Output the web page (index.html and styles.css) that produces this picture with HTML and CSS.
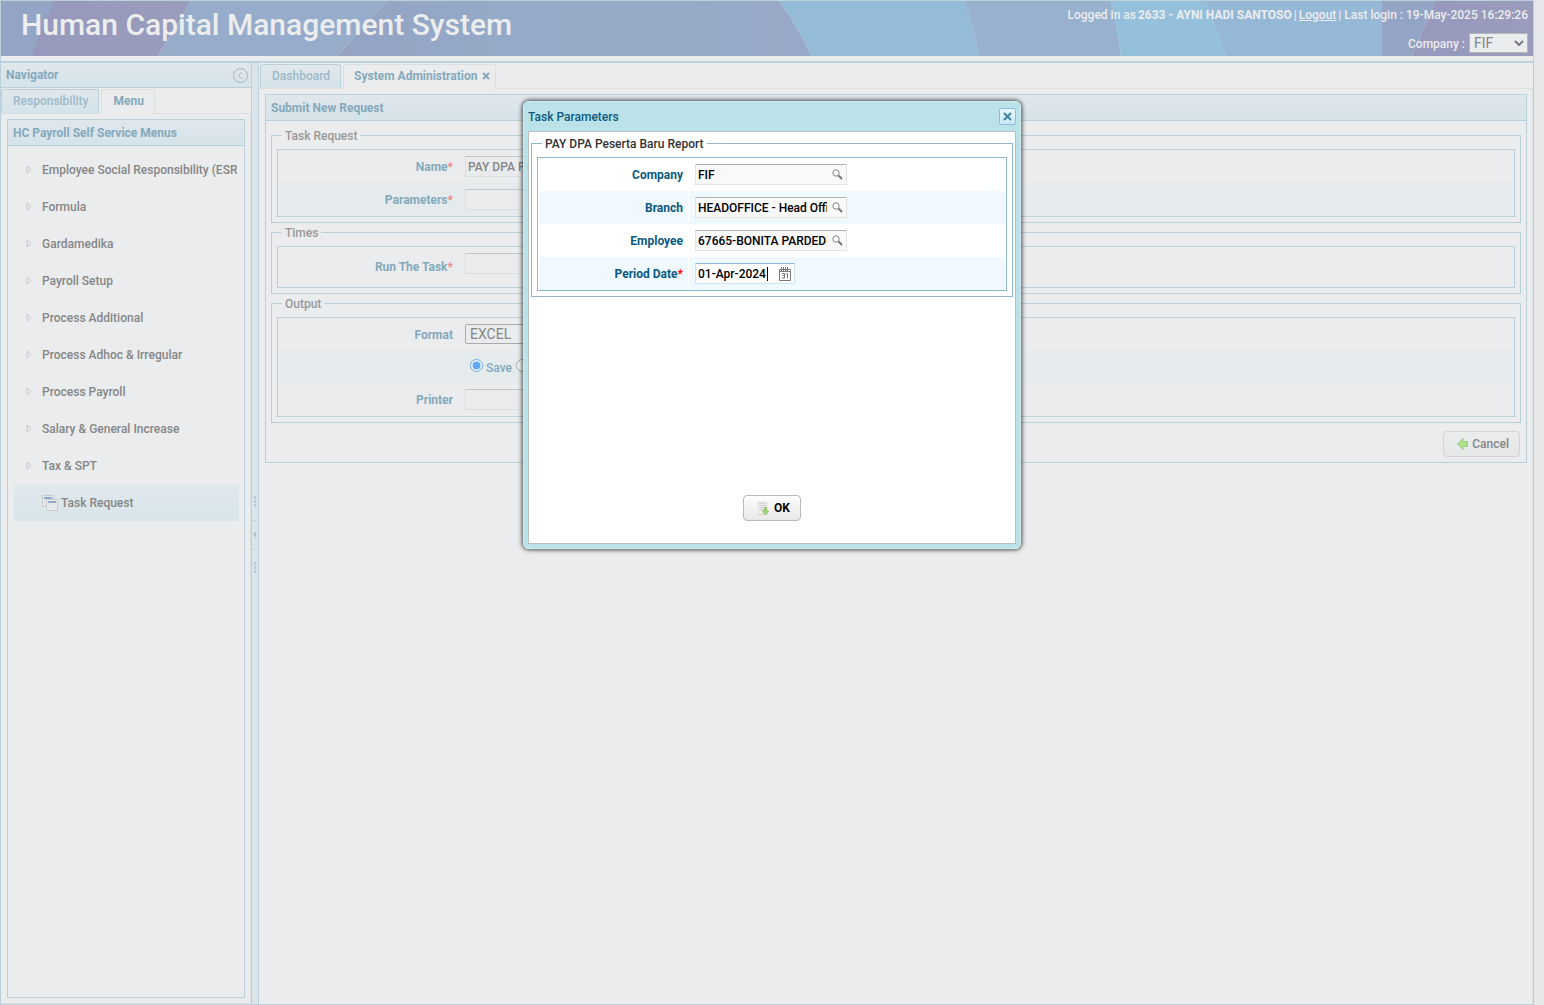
FILE: index.html
```html
<!DOCTYPE html>
<html lang="en">
<head>
<meta charset="utf-8">
<meta name="viewport" content="width=device-width, initial-scale=1">
<title>Human Capital Management System</title>
<link rel="stylesheet" href="styles.css">
</head>
<body>
<div class="app">
  <header class="banner">
    <svg class="banner-art" viewBox="0 0 1534 55" preserveAspectRatio="xMinYMin slice" aria-hidden="true">
      <defs>
        <linearGradient id="dusk"><stop offset="0" stop-color="#94a2c3"/><stop offset=".35" stop-color="#95aac8"/><stop offset=".7" stop-color="#96aac8"/><stop offset="1" stop-color="#98a8c8"/></linearGradient>
        <linearGradient id="lilac"><stop offset="0" stop-color="#9699bd"/><stop offset="1" stop-color="#9a9cbc"/></linearGradient>
      </defs>
      <path fill="#94a4c4" d="M0 0H60V55H0z"/>
      <path fill="url(#lilac)" d="M53 0H190L157 55H30z"/>
      <path fill="#96acca" d="M190 0H386L336 55H157z"/>
      <path fill="url(#dusk)" d="M386 0H778Q797 25 810 55H336z"/>
      <path fill="#94bbd7" d="M778 0H963Q973 27 978 55H810Q797 25 778 0z"/>
      <path fill="#97b1cf" d="M963 0H1110Q1117 27 1120 55H978Q973 27 963 0z"/>
      <path fill="#94c0db" d="M1110 0H1204L1225 55H1120Q1117 27 1110 0z"/>
      <path fill="#95b8d6" d="M1204 0H1381V55H1225z"/>
      <path fill="#94a4c4" d="M1381 0H1434L1411 55H1381z"/>
      <path fill="url(#lilac)" d="M1434 0H1534V55H1411z"/>
    </svg>
    <h1 class="banner-title">Human Capital Management System</h1>
    <div class="session">
      <p class="session-line">Logged in as <strong>2633 - AYNI HADI SANTOSO</strong> | <a href="#logout">Logout</a> | Last login : 19-May-2025 16:29:26</p>
      <p class="session-line"><label for="company-switch">Company :</label>
        <span class="select company-select"><select id="company-switch"><option>FIF</option></select><svg viewBox="0 0 10 6" aria-hidden="true"><path d="M1 1l4 4 4-4"/></svg></span></p>
    </div>
  </header>

  <div class="workspace">
    <aside class="navigator">
      <div class="nav-head"><h2>Navigator</h2>
        <button class="collapse" type="button" aria-label="Collapse navigator"><svg viewBox="0 0 15 15"><circle cx="7.500" cy="7.500" r="7"/><path d="M9 4L5.500 7.500 9 11"/></svg></button></div>
      <div class="tabs nav-tabs">
        <button class="tab" type="button">Responsibility</button>
        <button class="tab active" type="button">Menu</button>
      </div>
      <div class="nav-body">
        <nav class="menu-panel">
          <h2 class="panel-title">HC Payroll Self Service Menus</h2>
          <ul class="tree">
            <li><a href="#esr"><svg class="twist" viewBox="0 0 6 9"><path d="M1 1v7l4-3.500z"/></svg>Employee Social Responsibility (ESR)</a></li>
            <li><a href="#formula"><svg class="twist" viewBox="0 0 6 9"><path d="M1 1v7l4-3.500z"/></svg>Formula</a></li>
            <li><a href="#gardamedika"><svg class="twist" viewBox="0 0 6 9"><path d="M1 1v7l4-3.500z"/></svg>Gardamedika</a></li>
            <li><a href="#setup"><svg class="twist" viewBox="0 0 6 9"><path d="M1 1v7l4-3.500z"/></svg>Payroll Setup</a></li>
            <li><a href="#additional"><svg class="twist" viewBox="0 0 6 9"><path d="M1 1v7l4-3.500z"/></svg>Process Additional</a></li>
            <li><a href="#adhoc"><svg class="twist" viewBox="0 0 6 9"><path d="M1 1v7l4-3.500z"/></svg>Process Adhoc &amp; Irregular</a></li>
            <li><a href="#payroll"><svg class="twist" viewBox="0 0 6 9"><path d="M1 1v7l4-3.500z"/></svg>Process Payroll</a></li>
            <li><a href="#salary"><svg class="twist" viewBox="0 0 6 9"><path d="M1 1v7l4-3.500z"/></svg>Salary &amp; General Increase</a></li>
            <li><a href="#tax"><svg class="twist" viewBox="0 0 6 9"><path d="M1 1v7l4-3.500z"/></svg>Tax &amp; SPT</a></li>
            <li><a class="leaf" href="#task"><svg class="windows" viewBox="0 0 16 16"><path class="pane" d="M.5.500h11v11H.5z"/><path class="bar" d="M2 2h8v2H2z"/><path class="pane" d="M4.500 4.500h11v11h-11z"/><path class="bar" d="M6 6h8v2H6z"/></svg>Task Request</a></li>
          </ul>
        </nav>
      </div>
    </aside>

    <div class="splitter">
      <svg viewBox="0 0 6 80" aria-hidden="true"><path class="dots" d="M3 2v12M3 68v12"/><path class="rule" d="M0 26.500h6M0 55.500h6"/><path class="arrow" d="M4 37.500v6L1 40.500z"/></svg>
    </div>

    <main class="content">
      <div class="tabs content-tabs">
        <button class="tab" type="button">Dashboard</button>
        <button class="tab active" type="button">System Administration<svg class="tab-x" viewBox="0 0 8 8" aria-hidden="true"><path d="M1 1l6 6M7 1L1 7"/></svg></button>
      </div>
      <div class="content-body">
        <form class="request">
          <h2 class="panel-title">Submit New Request</h2>
          <div class="request-body">
            <fieldset>
              <legend>Task Request</legend>
              <div class="grid">
                <div class="row"><label for="name">Name<em>*</em></label><div class="cell"><input class="text wide" id="name" type="text" value="PAY DPA Peserta Baru Report"></div></div>
                <div class="row alt"><label for="params">Parameters<em>*</em></label><div class="cell"><input class="text wide" id="params" type="text"></div></div>
              </div>
            </fieldset>
            <fieldset>
              <legend>Times</legend>
              <div class="grid">
                <div class="row tall"><label for="run">Run The Task<em>*</em></label><div class="cell"><input class="text wide" id="run" type="text"></div></div>
              </div>
            </fieldset>
            <fieldset>
              <legend>Output</legend>
              <div class="grid">
                <div class="row"><label for="format">Format</label><div class="cell"><span class="select format-select"><select id="format"><option>EXCEL</option></select></span></div></div>
                <div class="row alt choice"><span class="spacer"></span><div class="cell radios"><label><input type="radio" name="dest" checked>Save</label><label><input type="radio" name="dest" aria-label="Print"></label></div></div>
                <div class="row"><label for="printer">Printer</label><div class="cell"><input class="text wide" id="printer" type="text"></div></div>
              </div>
            </fieldset>
            <div class="actions">
              <button class="btn" type="button"><svg class="btn-arrow" viewBox="0 0 11 12" aria-hidden="true"><path d="M.5 6L6 .5v3h4.500v5H6v3z"/></svg>Cancel</button>
            </div>
          </div>
        </form>
      </div>
    </main>
  </div>
</div>

<dialog open class="modal" aria-labelledby="modal-title">
  <div class="modal-head"><h2 id="modal-title">Task Parameters</h2>
    <button class="close" type="button" aria-label="Close"><svg viewBox="0 0 9 9"><path d="M1 1l7 7M8 1L1 8"/></svg></button></div>
  <form class="modal-body">
    <fieldset>
      <legend>PAY DPA Peserta Baru Report</legend>
      <div class="grid">
        <div class="row"><label for="p-company">Company</label><div class="cell"><span class="text combo"><input id="p-company" type="text" value="FIF"><svg class="lens" viewBox="0 0 11 11"><circle cx="4" cy="4" r="3.200"/><path class="handle" d="M6.500 6.500L10 10"/></svg></span></div></div>
        <div class="row alt"><label for="p-branch">Branch</label><div class="cell"><span class="text combo"><input id="p-branch" type="text" value="HEADOFFICE - Head Office"><svg class="lens" viewBox="0 0 11 11"><circle cx="4" cy="4" r="3.200"/><path class="handle" d="M6.500 6.500L10 10"/></svg></span></div></div>
        <div class="row"><label for="p-employee">Employee</label><div class="cell"><span class="text combo"><input id="p-employee" type="text" value="67665-BONITA PARDEDE"><svg class="lens" viewBox="0 0 11 11"><circle cx="4" cy="4" r="3.200"/><path class="handle" d="M6.500 6.500L10 10"/></svg></span></div></div>
        <div class="row alt"><label for="p-date">Period Date<em>*</em></label><div class="cell"><span class="text combo date"><input id="p-date" type="text" value="01-Apr-2024"><i class="caret"></i><svg class="calendar" viewBox="0 0 12 14"><path d="M.5 2.500h11v11H.5zM1 4.500h10"/><path d="M2.500 0v4M4.500 0v4M6.500 0v4M8.500 0v4"/><path d="M3 6.500h2.500v4.500H3M3.500 8.500h2M7 7l1.500-.5v5"/></svg></span></div></div>
      </div>
    </fieldset>
    <button class="btn ok" type="button"><svg class="page-icon" viewBox="0 0 14 15" aria-hidden="true"><path fill="#ececec" d="M1 0h11v14H1z"/><path stroke="#cfd3d3" d="M3 2.500h7M3 4.500h7M3 6.500h7M3 8.500h5M2 13.500h9"/><path fill="#a9d580" stroke="#93c26c" d="M8.500 6.500h2v3.500h2l-3 4-3-4h2z"/></svg>OK</button>
  </form>
</dialog>
</body>
</html>
```
FILE: styles.css
```css
:root {
  --page: #ebeced;
  --line: #bad0db;
  --soft: #dcdfe1;
  --head: linear-gradient(#e1e8eb, #dae4eb 55%, #d4e4ea);
  --blue: #84a9bb;
  --ink: #858687;
}
* { box-sizing: border-box; }
body {
  margin: 0;
  padding-right: 10px;
  background: #e5e7e9;
  color: var(--ink);
  font: 500 12px/18px Roboto, "Liberation Sans", sans-serif;
}
h1, h2, p, ul { margin: 0; padding: 0; font: inherit; }
button, input, select { font: inherit; color: inherit; }
button { cursor: pointer; }
em { color: #ee8585; font-style: normal; }
svg { display: block; flex: none; fill: none; }

.app {
  display: flex;
  flex-direction: column;
  min-height: 100vh;
  background: var(--page);
  border: 1px solid var(--line);
}

/* Banner */
.banner {
  position: relative;
  display: flex;
  justify-content: space-between;
  height: 55px;
  padding: 0 5px 0 20px;
  color: #eceded;
  overflow: hidden;
}
.banner-art { position: absolute; inset: 0; width: 100%; height: 100%; }
.banner-title { position: relative; font-size: 30px; font-weight: 500; line-height: 48px; }
.session { position: relative; padding-top: 5px; }
.session-line {
  display: flex;
  justify-content: flex-end;
  gap: 2px;
  height: 27px;
  white-space: nowrap;
}
.session-line strong { font-weight: 700; }
.session-line a { color: inherit; }
.session-line label { padding-right: 2px; line-height: 22px; }
.select { position: relative; display: inline-block; color: var(--ink); }
.select select {
  appearance: none;
  width: 100%;
  height: 20px;
  padding: 0 4px;
  background: var(--page);
  border: 1px solid #b5b6b7;
  border-radius: 0;
  font-size: 14px;
  font-weight: 400;
  line-height: 18px;
}
.select svg { position: absolute; right: 4px; top: 7px; width: 10px; height: 6px; stroke: #77797a; stroke-width: 2; }
.company-select { width: 59px; }
.format-select { width: 100px; }
.format-select select { border-color: #a9aaab; border-radius: 2px; }

/* Workspace */
.workspace {
  flex: 1;
  display: flex;
  margin-top: 5px;
  border-top: 2px solid var(--line);
}
.navigator {
  display: flex;
  flex-direction: column;
  flex: 0 0 251px;
  min-width: 0;
  border-right: 1px solid var(--line);
}
.nav-head {
  display: flex;
  justify-content: space-between;
  align-items: center;
  height: 25px;
  padding: 0 3px 0 5px;
  background: var(--head);
  border-bottom: 1px solid var(--line);
  color: var(--blue);
  font-weight: 700;
}
.collapse { padding: 0; border: 0; background: none; }
.collapse svg { width: 15px; height: 15px; stroke: #a9b3b8; }
.tabs { display: flex; align-items: flex-end; gap: 2px; height: 26px; border-bottom: 1px solid var(--soft); }
.tab {
  display: flex;
  align-items: center;
  height: 24px;
  padding: 0 10px 2px 11px;
  border: 1px solid var(--line);
  border-bottom: 0;
  border-radius: 3px 3px 0 0;
  background: var(--head);
  color: #9bb9c7;
  white-space: nowrap;
}
.tab.active {
  height: 25px;
  margin-bottom: -1px;
  background: var(--page);
  border-color: var(--soft);
  color: var(--blue);
  font-weight: 700;
}
.tab-x { width: 8px; height: 8px; margin-left: 5px; stroke: var(--blue); stroke-width: 2; }
.content-tabs .tab.active { padding-right: 5px; padding-left: 10px; }
.nav-body {
  flex: 1;
  display: flex;
  padding: 5px 5px 5px 6px;
  border-right: 1px solid var(--soft);
  border-bottom: 1px solid var(--soft);
}
.menu-panel { flex: 1; min-width: 0; border: 1px solid var(--line); }
.panel-title {
  height: 26px;
  padding: 0 5px;
  background: var(--head);
  border-bottom: 1px solid var(--line);
  color: var(--blue);
  font-weight: 700;
  line-height: 26px;
}
.tree { padding: 5px 5px 0 6px; list-style: none; }
.tree a {
  display: flex;
  align-items: center;
  gap: 10px;
  height: 37px;
  padding-left: 12px;
  margin-right: 2px;
  overflow: hidden;
  color: var(--ink);
  text-decoration: none;
  white-space: nowrap;
}
.tree .leaf { gap: 3px; margin-right: 0; padding-left: 28px; background: linear-gradient(#e0e8ea, #d8e5ec); }
.twist { width: 6px; height: 9px; stroke: #c5c8ca; }
.windows { width: 16px; height: 16px; }
.windows .pane { fill: #e6e8e9; stroke: #c9cccd; }
.windows .bar { fill: #93a8c9; }
.splitter {
  display: flex;
  align-items: center;
  flex: 0 0 7px;
  background: linear-gradient(90deg, #dce6eb, #d9e5eb);
  border-right: 1px solid var(--line);
}
.splitter svg { width: 6px; height: 80px; }
.splitter .dots { stroke: #bccbd3; stroke-width: 2; stroke-dasharray: 3 1; }
.splitter .rule { stroke: #c9d6dc; }
.splitter .arrow { fill: #b2bfc6; }
.content { flex: 1; min-width: 0; display: flex; flex-direction: column; }
.content-body { flex: 1; padding: 5px 5px 5px 6px; border-right: 1px solid var(--soft); }
.content-tabs { padding-left: 1px; }

/* Request form */
.request { border: 1px solid var(--line); }
.request-body { padding: 5px; }
fieldset { min-width: 0; margin: 0; padding: 5px; border: 1px solid var(--line); }
legend { height: 18px; margin-left: 5px; padding: 0 3px; color: #979899; line-height: 20px; }
.grid { border: 1px solid var(--line); padding: 0 1px; }
.row { display: grid; grid-template-columns: 179px 1fr; height: 33px; }
.row.tall { height: 40px; }
.row.choice { height: 32px; }
.row.alt { background: #e5ebec; }
.row > label { align-self: center; padding-right: 5px; text-align: right; color: var(--blue); font-weight: 700; }
.cell { padding: 6px 6px 0; border-left: 1px solid var(--page); }
.text {
  display: block;
  width: 152px;
  height: 21px;
  padding: 0 2px;
  border: 1px solid var(--soft);
  border-top-color: #c3c5c6;
  background: #eaebec;
}
.text.wide { width: 260px; }
.radios { display: flex; gap: 4px; padding-left: 11px; }
.radios label { display: flex; align-items: flex-start; gap: 3px; color: var(--blue); line-height: 22px; }
.radios input { width: 13px; height: 13px; margin: 2px 0 0; opacity: .55; }
.actions { display: flex; justify-content: flex-end; padding: 8px 1px 0 0; }
.btn {
  display: flex;
  align-items: center;
  gap: 4px;
  height: 26px;
  padding: 0 10px 0 13px;
  border: 1px solid #d2d3d4;
  border-radius: 4px;
  background: linear-gradient(#ecedee, #e5e6e7);
}
.btn-arrow { width: 11px; height: 12px; fill: #ace08b; stroke: #9acf80; }

/* Task parameters dialog */
.modal {
  --line: #8fb8cf;
  position: absolute;
  top: 101px;
  width: 498px;
  min-height: 448px;
  margin: 0 auto;
  padding: 0 4px 4px;
  display: flex;
  flex-direction: column;
  border: 1px solid #cdeaf0;
  border-radius: 6px;
  background: rgba(185, 225, 233, .95);
  box-shadow: 0 0 4px 1px rgba(0, 0, 0, .7);
  color: #000;
}
.modal-head { display: flex; justify-content: space-between; align-items: center; height: 29px; color: #0b5a80; }
.close {
  display: grid;
  place-items: center;
  width: 17px;
  height: 17px;
  padding: 0;
  border: 1px solid #8dbfdc;
  border-radius: 2px;
  background: linear-gradient(#e8f6fd, #cbe7f7);
}
.close svg { width: 9px; height: 9px; stroke: #3f83a3; stroke-width: 2; }
.modal-body { flex: 1; display: flex; flex-direction: column; padding: 2px; border: 1px solid #b9bfc1; background: #fff; }
.modal legend { color: #333; }
.modal .row { grid-template-columns: 149px 1fr; }
.modal .row > label { color: #0b5a80; }
.modal .alt { background: #f0f9ff; }
.modal .cell { border-color: #fff; }
.modal em { color: #f00; }
.modal .text { border-color: #e3e3e3; border-top-color: #b2b2b2; background: #f9f9f9; }
.combo { position: relative; display: flex; align-items: center; }
.combo input { flex: 1; min-width: 0; height: 18px; padding: 0; border: 0; outline: 0; background: none; }
.lens { width: 11px; height: 11px; margin: 0 1px 0 5px; stroke: #888; }
.lens .handle { stroke: #777; stroke-width: 2; }
.modal .date { width: 100px; background: #fff; border-color: #cfe3f7; border-top-color: #90b6dc; }
.caret { position: absolute; left: 71px; top: 3px; width: 1px; height: 14px; background: #000; }
.calendar { width: 12px; height: 14px; margin-right: 1px; stroke: #777; }
.ok { align-self: center; margin: auto 0 20px; padding: 0 10px 0 12px; border-color: #bbb; background: linear-gradient(#fefefe, #e8e8e8); font-weight: 700; }
.page-icon { width: 14px; height: 15px; }
```
